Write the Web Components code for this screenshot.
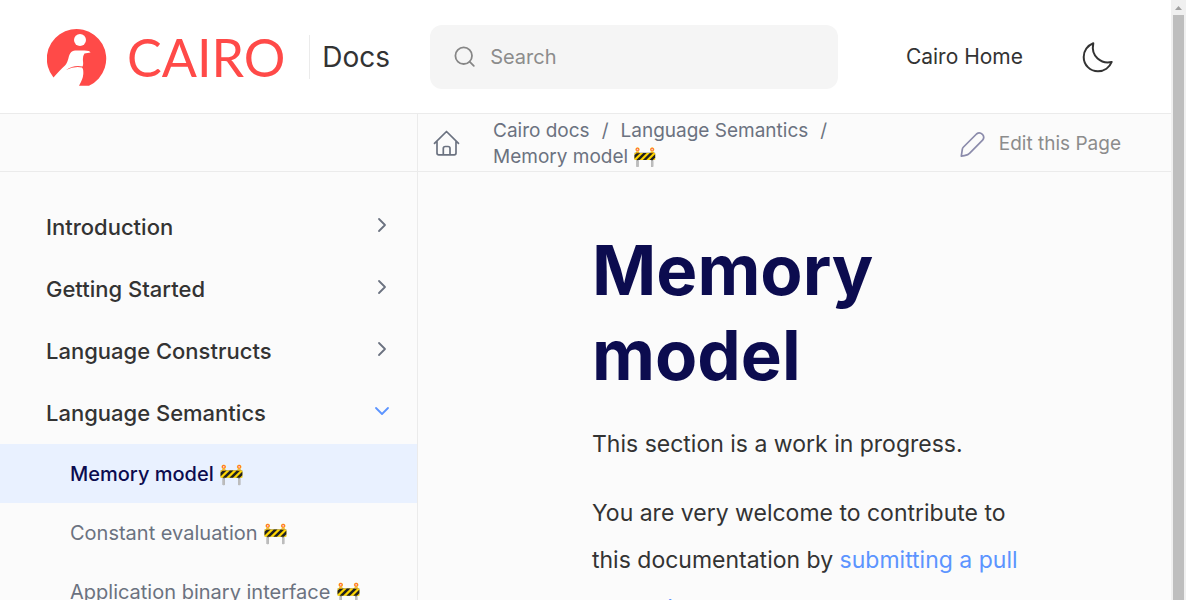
<!DOCTYPE html>
<html lang="en">
<head>
<meta charset="utf-8">
<meta name="viewport" content="width=device-width, initial-scale=1">
<title>Memory model :: Cairo docs</title>
<style>
  html, body { height: 100%; }
  body {
    margin: 0;
    overflow: hidden;
    background: #fbfbfb;
    color: #333;
    font-family: Inter, "Noto Sans", "Noto Color Emoji", sans-serif;
    --line: #ebebeb;
    --muted: #6b7280;
    --gray: #8c8c8c;
    --navy: #0c0c4f;
    --blue: #5c94ff;
    --side: 417px;
  }
</style>
</head>
<body>
<docs-page></docs-page>
<script>
const define = (name, html) => {
  const template = document.createElement('template');
  template.innerHTML = html;
  customElements.define(name, class extends HTMLElement {
    constructor() {
      super();
      this.attachShadow({ mode: 'open' }).append(template.content.cloneNode(true));
    }
  });
};

define('cairo-logo', `
  <style>
    :host { display: block; }
    a { display: flex; align-items: center; gap: 20px; color: #ff4a48; text-decoration: none; }
    svg { display: block; width: 60px; height: 60px; }
    span { font: 400 52px/60px Lato, sans-serif; }
  </style>
  <a href="#">
    <svg viewBox="0 -2 60 60" aria-hidden="true">
      <path fill="currentColor" d="M6.500 48.500A29.700 29.700 0 1 1 42 56.700H32Q36 50 36.300 45Q36.500 39.500 35 38.500Q27 37 19 41Q27 35.500 35.500 37.500Q36.500 36.500 36 32Q35.500 27 37.500 24.500L43.500 23.600Q43 21.500 37 21.600L28 21.600Q23.500 22 22 27Q20.500 34 18 36.500Q13 41 6.500 48.500Z"/>
      <circle cx="33" cy="11" r="6" fill="#fff"/>
    </svg>
    <span>CAIRO</span>
  </a>`);

define('search-box', `
  <style>
    :host { display: block; }
    label { box-sizing: border-box; display: flex; align-items: center; gap: 14px; height: 64px; padding: 0 24px; border-radius: 12px; background: #f5f5f5; }
    svg { flex: none; width: 22px; height: 22px; }
    input { flex: 1; min-width: 0; padding: 0; border: 0; outline: 0; background: none; color: #333; font: 400 20px/24px Inter, sans-serif; }
    input::placeholder { color: #8c8c8c; opacity: 1; }
  </style>
  <label>
    <svg viewBox="0 0 22 22" fill="none" stroke="#868686" stroke-width="1.800" stroke-linecap="round" aria-hidden="true"><circle cx="9.700" cy="9.700" r="8.300"/><path d="M15.800 15.800 19.800 19.800"/></svg>
    <input type="text" placeholder="Search" aria-label="Search">
  </label>`);

define('site-header', `
  <style>
    :host { box-sizing: border-box; display: flex; align-items: center; height: 114px; padding: 0 57px 0 47px; background: #fff; border-bottom: 1px solid var(--line); }
    .docs { margin-left: 24px; padding-left: 12px; border-left: 1px solid var(--line); color: #333; font-size: 28px; line-height: 44px; text-decoration: none; }
    search-box { flex: 0 1 408px; margin-left: 40px; }
    .home { margin-left: auto; color: #333; font-size: 21px; line-height: 28px; text-decoration: none; white-space: nowrap; }
    button { flex: none; display: block; margin-left: 57px; padding: 0; border: 0; background: none; }
    svg { display: block; width: 34px; height: 34px; }
  </style>
  <cairo-logo></cairo-logo>
  <a class="docs" href="#">Docs</a>
  <search-box></search-box>
  <a class="home" href="#">Cairo Home</a>
  <button type="button" aria-label="Switch to dark theme">
    <svg viewBox="0 0 34 34" fill="none" stroke="#333" stroke-width="2" stroke-linejoin="round"><path d="M13.300 3.200C7.500 5.500 3.700 10.800 3.700 17c0 8 6.300 14.300 14.300 14.300 6.200 0 11.500-3.800 13.700-9.400C21.500 24.300 10.500 16.500 13.300 3.200Z"/></svg>
  </button>`);

define('doc-toolbar', `
  <style>
    :host { box-sizing: border-box; display: flex; height: 58px; border-bottom: 1px solid var(--line); }
    .blank { flex: none; width: var(--side); border-right: 1px solid var(--line); }
    .row { flex: 1; display: flex; align-items: center; padding: 0 50px 0 15px; }
    a { color: inherit; text-decoration: none; }
    svg { display: block; flex: none; width: 28px; height: 28px; }
    nav { flex: 0 1 380px; margin-left: 32px; padding-top: 2px; color: var(--muted); }
    ol { display: flex; flex-wrap: wrap; margin: 0; padding: 0; list-style: none; font-size: 19px; line-height: 26px; }
    li:not(:last-child)::after { content: "/"; padding: 0 12px; }
    .edit { display: flex; align-items: center; gap: 12px; margin-left: auto; padding-top: 2px; color: var(--gray); font-size: 19px; line-height: 26px; white-space: nowrap; }
  </style>
  <div class="blank"></div>
  <div class="row">
    <a href="#" aria-label="Home">
      <svg viewBox="0 0 28 28" fill="none" stroke="#6b7280" stroke-width="1.700" stroke-linecap="round" stroke-linejoin="round"><path d="M1.500 14.300 13.500 2.500 25.500 14.300M4 12.500V24q0 1.800 1.800 1.800H21.200Q23 25.800 23 24V12.500M10.300 25.500V19.500q0-2 2-2H15q2 0 2 2V25.500"/></svg>
    </a>
    <nav aria-label="Breadcrumb"><ol><li><a href="#">Cairo docs</a></li><li><a href="#">Language Semantics</a></li><li><a href="#">Memory model 🚧</a></li></ol></nav>
    <a class="edit" href="#">
      <svg viewBox="0 0 28 28" fill="none" stroke="#8b8bab" stroke-width="1.700" stroke-linejoin="round" aria-hidden="true"><path d="M2.300 26.200 3.300 19.300Q3.500 18 4.500 17L17.500 4Q20.500 1.600 23.400 4.300 26 7.300 23.600 10.200L10.500 23.300Q9.500 24.500 8.100 24.900Q5.500 25.600 2.300 26.200Z"/></svg>
      <span>Edit this Page</span>
    </a>
  </div>`);

define('nav-group', `
  <style>
    :host { display: block; }
    button { box-sizing: border-box; display: flex; align-items: center; justify-content: space-between; width: 100%; height: 62px; padding: 0 26px 0 46px; border: 0; background: none; color: #333; font: 500 22px/28px Inter, sans-serif; text-align: left; }
    svg { display: block; width: 18px; height: 18px; margin-bottom: 4px; fill: none; stroke: var(--muted); stroke-width: 1.8; stroke-linecap: round; stroke-linejoin: round; }
    :host([open]) svg { stroke: var(--blue); transform: rotate(90deg); }
    .items { display: none; }
    :host([open]) .items { display: block; }
  </style>
  <button type="button"><slot name="label"></slot><svg viewBox="0 0 18 18" aria-hidden="true"><path d="M6 3 12 9 6 15"/></svg></button>
  <div class="items"><slot></slot></div>`);

define('nav-item', `
  <style>
    :host { display: block; color: var(--muted); font-size: 20px; line-height: 57px; }
    :host([current]) { background: #e9f1ff; color: var(--navy); font-weight: 500; }
    a { display: block; padding: 2px 0 0 70px; color: inherit; text-decoration: none; white-space: nowrap; }
  </style>
  <a href="#"><slot></slot></a>`);

define('side-nav', `
  <style>
    :host { display: block; flex: none; width: var(--side); padding-top: 24px; border-right: 1px solid var(--line); }
  </style>
  <nav aria-label="Documentation">
    <nav-group><span slot="label">Introduction</span></nav-group>
    <nav-group><span slot="label">Getting Started</span></nav-group>
    <nav-group><span slot="label">Language Constructs</span></nav-group>
    <nav-group open>
      <span slot="label">Language Semantics</span>
      <nav-item current>Memory model 🚧</nav-item>
      <nav-item>Constant evaluation 🚧</nav-item>
      <nav-item>Application binary interface 🚧</nav-item>
    </nav-group>
  </nav>`);

define('doc-article', `
  <style>
    :host { display: block; flex: 1; min-width: 0; padding: 56px 140px 0 174px; }
    h1 { margin: 0 0 23px; color: var(--navy); font-size: 69px; line-height: 85px; font-weight: 700; }
    p { margin: 0 0 22px; font-size: 23px; line-height: 47px; }
    a { color: var(--blue); text-decoration: none; }
  </style>
  <h1>Memory model</h1>
  <p>This section is a work in progress.</p>
  <p>You are very welcome to contribute to this documentation by <a href="#">submitting a pull request</a>.</p>`);

define('page-scrollbar', `
  <style>
    :host { box-sizing: border-box; flex: none; display: flex; flex-direction: column; width: 15px; padding: 0 2px; background: #f0f0f0; }
    svg { flex: none; display: block; width: 11px; height: 15px; }
    div { flex: 1; background: #bebebe; }
  </style>
  <svg viewBox="0 0 11 15" aria-hidden="true"><path fill="#a0a0a0" d="M2 10 5.500 6 9 10Z"/></svg>
  <div></div>`);

define('docs-page', `
  <style>
    :host { display: flex; height: 100vh; overflow: hidden; }
    .view { flex: 1; min-width: 0; display: flex; flex-direction: column; }
    .body { flex: 1; min-height: 0; display: flex; overflow: hidden; }
  </style>
  <div class="view">
    <site-header></site-header>
    <doc-toolbar></doc-toolbar>
    <div class="body"><side-nav></side-nav><doc-article></doc-article></div>
  </div>
  <page-scrollbar></page-scrollbar>`);
</script>
</body>
</html>
